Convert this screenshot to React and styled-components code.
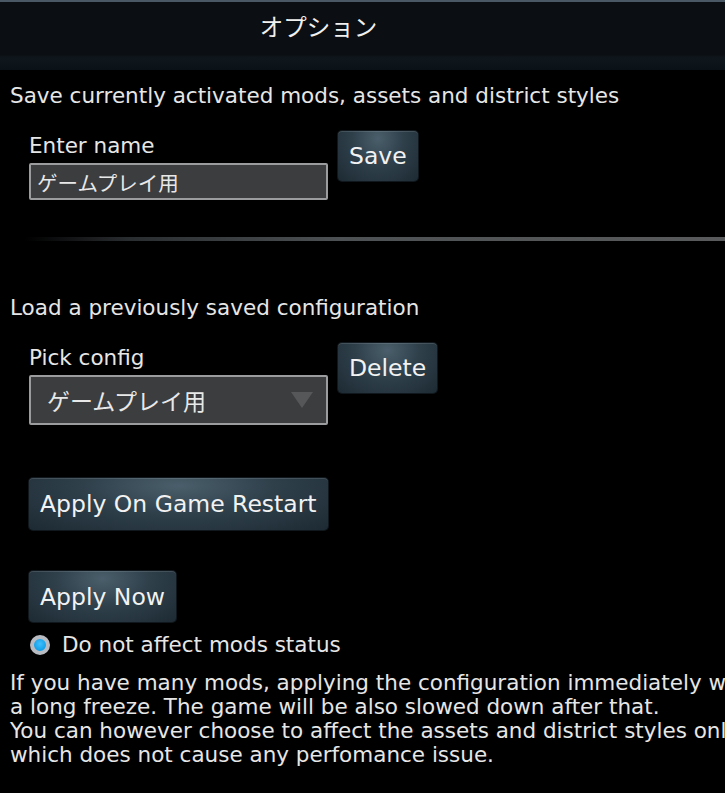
import React from 'react';
import styled, { createGlobalStyle } from 'styled-components';

const GlobalStyle = createGlobalStyle`
	html, body {
		margin: 0;
		padding: 0;
		background: #000;
	}
	body {
		font-family: "DejaVu Sans", "Noto Sans CJK JP", sans-serif;
		color: #e6e6e6;
	}
`;

const Page = styled.div`
	width: 725px;
	height: 793px;
	overflow: hidden;
	background: #000;
`;

const TitleBar = styled.div`
	height: 70px;
	display: flex;
	justify-content: center;
	align-items: flex-start;
	box-sizing: border-box;
	padding: 9px 88px 0 0;
	border-top: 2px solid #4a5866;
	background: linear-gradient(#0b0e12 0, #0b0e12 52px, #0f171d 56px, #0a1116 70px);
	font-family: "Noto Sans CJK JP", sans-serif;
	font-size: 23.5px;
	line-height: 30px;
	color: #f0f0f0;
`;

const Content = styled.div`
	padding: 14px 0 0 10px;
	display: flex;
	flex-direction: column;
`;

const Heading = styled.div`
	font-size: 21.5px;
	line-height: 24px;
	white-space: nowrap;
	margin-top: ${(p) => p.top || 0}px;
`;

const FieldRow = styled.div`
	display: flex;
	align-items: flex-start;
	gap: 10px;
	padding-left: 19px;
	margin-top: ${(p) => p.top || 0}px;
`;

const Field = styled.div`
	display: flex;
	flex-direction: column;
	gap: 6px;
	width: 299px;
	padding-top: 4px;
`;

const Label = styled.div`
	font-size: 21.5px;
	line-height: 22px;
	white-space: nowrap;
`;

const Box = styled.div`
	box-sizing: border-box;
	height: ${(p) => p.h}px;
	border: 2px solid #9a9c9e;
	border-radius: 2px;
	background: #3b3d3f;
	display: flex;
	align-items: center;
	padding-left: ${(p) => p.pad}px;
	padding-right: 13px;
	font-family: "Noto Sans CJK JP", sans-serif;
	font-size: ${(p) => p.fs}px;
	color: #e8e8e8;
	white-space: nowrap;
`;

const Arrow = styled.div`
	margin-left: auto;
	width: 0;
	height: 0;
	border-left: 11px solid transparent;
	border-right: 11px solid transparent;
	border-top: 16px solid #555759;
`;

const Button = styled.div`
	box-sizing: border-box;
	height: ${(p) => p.h || 51}px;
	padding: 0 11px;
	display: inline-flex;
	align-items: center;
	align-self: flex-start;
	border-radius: 4px;
	background: radial-gradient(ellipse at 50% 15%, #4a5f6b 0%, #2f404b 45%, #1d2a33 100%);
	box-shadow: inset 0 1px 0 rgba(255, 255, 255, 0.12), 0 0 0 1px #10181d;
	font-size: ${(p) => p.fs || 23.5}px;
	color: #f2f2f2;
	white-space: nowrap;
	margin-top: ${(p) => p.top || 0}px;
	margin-left: ${(p) => p.left || 0}px;
`;

const Divider = styled.div`
	height: 4px;
	margin: 37px 0 0 15px;
	background: linear-gradient(90deg, rgba(0, 0, 0, 0) 0%, #2a2d30 15%, #4e5153 45%, #585a5b 100%);
`;

const RadioRow = styled.div`
	display: flex;
	align-items: center;
	gap: 12px;
	margin: 12px 0 0 20px;
	font-size: 21.5px;
	line-height: 22px;
	white-space: nowrap;
`;

const Radio = styled.div`
	width: 20px;
	height: 20px;
	flex: none;
	box-sizing: border-box;
	border-radius: 50%;
	border: 4px solid #b8bcc2;
	background: radial-gradient(circle at 50% 40%, #3fc0ff 0%, #129fe6 70%);
`;

const Paragraph = styled.div`
	margin-top: 15px;
	font-size: 21.5px;
	line-height: 24px;
	white-space: nowrap;
`;

export default function App() {
	return (
		<Page>
			<GlobalStyle />
			<TitleBar>オプション</TitleBar>
			<Content>
				<Heading>Save currently activated mods, assets and district styles</Heading>
				<FieldRow top={23}>
					<Field>
						<Label>Enter name</Label>
						<Box h={37} pad={6} fs={20.5}>ゲームプレイ用</Box>
					</Field>
					<Button h={50}>Save</Button>
				</FieldRow>
				<Divider />
				<Heading top={55}>Load a previously saved configuration</Heading>
				<FieldRow top={23}>
					<Field>
						<Label>Pick config</Label>
						<Box h={50} pad={16} fs={23}>
							ゲームプレイ用
							<Arrow />
						</Box>
					</Field>
					<Button h={50}>Delete</Button>
				</FieldRow>
				<Button top={53} left={19} h={52}>Apply On Game Restart</Button>
				<Button top={41} left={19}>Apply Now</Button>
				<RadioRow>
					<Radio />
					Do not affect mods status
				</RadioRow>
				<Paragraph>
					If you have many mods, applying the configuration immediately will cause
					<br />
					a long freeze. The game will be also slowed down after that.
					<br />
					You can however choose to affect the assets and district styles only,
					<br />
					which does not cause any perfomance issue.
				</Paragraph>
			</Content>
		</Page>
	);
}
